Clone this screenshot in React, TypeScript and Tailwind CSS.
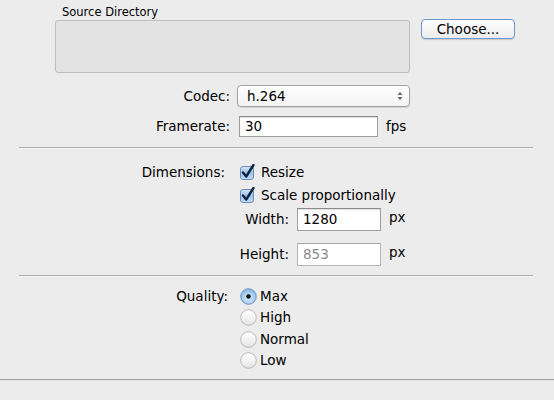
import React from "react";

function Checkbox() {
  return (
    <svg width="16" height="17" viewBox="0 0 16 17" className="block">
      <defs>
        <linearGradient id="cbg" x1="0" y1="0" x2="0" y2="1">
          <stop offset="0" stopColor="#d4e6f8" />
          <stop offset="0.5" stopColor="#9cc3ec" />
          <stop offset="1" stopColor="#c3ddf6" />
        </linearGradient>
      </defs>
      <rect x="0.5" y="2.5" width="13" height="13" rx="2.5" fill="url(#cbg)" stroke="#6d8db5" />
      <path d="M3 8.5 L6.2 12.5 L13.5 1" fill="none" stroke="#13233f" strokeWidth="2.4" strokeLinecap="round" strokeLinejoin="round" />
    </svg>
  );
}

function Radio({ on }: { on?: boolean }) {
  return (
    <svg width="17" height="17" viewBox="0 0 17 17" className="block">
      <defs>
        <radialGradient id="ron" cx="0.5" cy="0.6" r="0.6">
          <stop offset="0" stopColor="#e2effb" />
          <stop offset="0.6" stopColor="#a9cdf1" />
          <stop offset="1" stopColor="#7fb0e4" />
        </radialGradient>
        <linearGradient id="roff" x1="0" y1="0" x2="0" y2="1">
          <stop offset="0" stopColor="#ffffff" />
          <stop offset="0.6" stopColor="#f1f1f1" />
          <stop offset="1" stopColor="#e2e2e2" />
        </linearGradient>
      </defs>
      <circle cx="8.5" cy="8.5" r="7.8" fill={on ? "url(#ron)" : "url(#roff)"} stroke={on ? "#6c8fba" : "#b3b3b3"} strokeWidth="0.9" />
      {on && <circle cx="8.5" cy="8.5" r="2.3" fill="#111" />}
    </svg>
  );
}

function Separator() {
  return (
    <div className="ml-[19px] mr-[21px]">
      <div className="h-px bg-[#a9a9a9]" />
      <div className="h-px bg-[#f6f6f6]" />
    </div>
  );
}

export default function App() {
  return (
    <div className="w-[554px] h-[400px] bg-[#ececec] font-['DejaVu_Sans',sans-serif] text-[13.5px] text-black overflow-hidden">
      <div className="pl-[62px] pt-[5px] h-[20px] text-[11.5px] leading-[14px]">Source Directory</div>
      <div className="flex items-start ml-[55px] gap-[11px]">
        <div className="w-[355px] h-[53px] bg-[#e3e3e3] border border-[#bdbdbd] rounded-[3px]" />
        <button className="-mt-[1px] w-[94px] h-[20px] rounded-[4px] border border-[#6f98cf] bg-gradient-to-b from-[#ffffff] to-[#ececec] shadow-[0_1px_1px_rgba(0,0,0,0.15)] text-[13.5px] leading-[18px] text-black">
          Choose...
        </button>
      </div>

      <div className="mt-[12px] grid grid-cols-[231px_1fr] gap-x-[6px]">
        <div className="h-[22px] flex items-center justify-end pr-[1px]">Codec:</div>
        <div className="h-[22px] w-[173px] rounded-[4px] border border-[#a3a3a3] bg-gradient-to-b from-[#ffffff] to-[#f3f3f3] shadow-[0_1px_1px_rgba(0,0,0,0.12)] flex items-center justify-between pl-[9px] pr-[6px]">
          <span>h.264</span>
          <svg width="6" height="10" viewBox="0 0 6 10">
            <path d="M0.5 4 L3 0.8 L5.5 4 Z" fill="#6b6b6b" />
            <path d="M0.5 6 L3 9.2 L5.5 6 Z" fill="#6b6b6b" />
          </svg>
        </div>
      </div>

      <div className="mt-[9px] grid grid-cols-[231px_1fr] gap-x-[8px]">
        <div className="h-[21px] flex items-center justify-end pr-[1px]">Framerate:</div>
        <div className="flex items-center gap-[8px]">
          <div className="h-[21px] w-[139px] border border-[#9e9e9e] border-t-[#8a8a8a] bg-white shadow-[inset_0_1px_1px_rgba(0,0,0,0.12)] flex items-center pl-[5px]">30</div>
          <span>fps</span>
        </div>
      </div>

      <div className="mt-[10px]">
        <Separator />
      </div>

      <div className="mt-[14px] grid grid-cols-[231px_1fr] gap-x-[9px]">
        <div className="h-[18px] flex items-center justify-end pr-[6px]">Dimensions:</div>
        <div className="h-[18px] flex items-center gap-[5px]">
          <Checkbox />
          <span>Resize</span>
        </div>
        <div className="h-[23px]" />
        <div className="h-[23px] flex items-center gap-[5px] pt-[5px]">
          <Checkbox />
          <span>Scale proportionally</span>
        </div>
      </div>

      <div className="mt-[4px] ml-[238px] flex flex-col gap-[12px]">
        <div className="flex items-center">
          <div className="w-[51px] text-right">Width:</div>
          <div className="ml-[8px] h-[23px] w-[84px] border border-[#9e9e9e] border-t-[#8a8a8a] bg-white shadow-[inset_0_1px_1px_rgba(0,0,0,0.12)] flex items-center pl-[5px]">1280</div>
          <div className="ml-[8px] -mt-[4px]">px</div>
        </div>
        <div className="flex items-center">
          <div className="w-[51px] text-right">Height:</div>
          <div className="ml-[8px] h-[23px] w-[84px] border border-[#b4b4b4] border-t-[#a5a5a5] bg-white flex items-center pl-[5px] text-[#8a8a8a]">853</div>
          <div className="ml-[8px] -mt-[4px]">px</div>
        </div>
      </div>

      <div className="mt-[9px]">
        <Separator />
      </div>

      <div className="mt-[8px] grid grid-cols-[228px_1fr] gap-x-[12px]">
        <div className="h-[22px] flex items-center justify-end">Quality:</div>
        <div className="h-[22px] flex items-center gap-[3px]"><Radio on /><span>Max</span></div>
        <div />
        <div className="h-[21px] flex items-center gap-[3px]"><Radio /><span>High</span></div>
        <div />
        <div className="h-[22px] flex items-center gap-[3px]"><Radio /><span>Normal</span></div>
        <div />
        <div className="h-[21px] flex items-center gap-[3px]"><Radio /><span>Low</span></div>
      </div>

      <div className="mt-[8px] h-px bg-[#9d9d9d]" />
      <div className="h-px bg-[#e4e4e4]" />
    </div>
  );
}
